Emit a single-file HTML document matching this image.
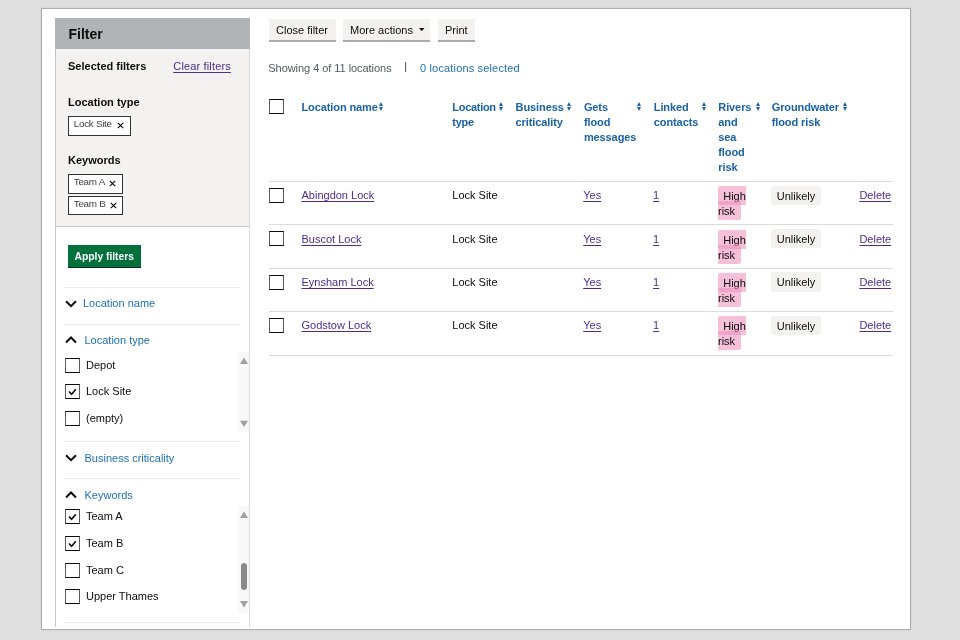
<!DOCTYPE html>
<html><head><meta charset="utf-8">
<style>
*{box-sizing:border-box;margin:0;padding:0}
html,body{width:960px;height:640px;overflow:hidden;white-space:nowrap;background:#dfdfdf;font-family:"Liberation Sans",sans-serif;color:#0b0c0c;font-size:11px;line-height:15px}
.a{position:absolute}
svg{display:block}
#bg{position:absolute;left:42px;top:9px;width:868px;height:620px;background:#fff;box-shadow:0 0 0 1px #adadad,0 0 2px 1px rgba(0,0,0,.1)}
#frame{position:absolute;left:41px;top:8px;width:869px;height:621px;will-change:transform}
#panel{position:absolute;left:14px;top:11px;width:195px;height:608px;border-left:1px solid #c5c8ca;border-right:1px solid #d9dbdd;background:#fff}
#fhead{position:absolute;left:-1px;top:-1px;width:195px;height:31px;background:#b1b4b6}
#fhead span{margin-top:1px}
#fhead span{position:absolute;left:13.5px;top:6px;font-size:14px;font-weight:bold;line-height:18px}
#sel{position:absolute;left:0;top:30px;width:193px;height:178px;background:#f3f2f1;border-bottom:1px solid #c5c8ca}
.b{font-weight:bold}
.link{color:#4c2c92;text-decoration:underline;text-underline-offset:2px}
.blue{color:#1d70b8}
.tag{position:absolute;border:1px solid #303233;background:#fff;height:20px}
.tag span{position:absolute;left:4.8px;top:1px;font-size:9.9px;letter-spacing:-0.3px;line-height:12px;color:#3d4043}
.tag i{position:absolute}
.btn-g{position:absolute;left:12px;background:#00703c;box-shadow:0 1px 0 #002d18;color:#fff;font-weight:bold;font-size:10.3px;height:21.5px;line-height:24px;padding:0 6.5px;width:73px;white-space:nowrap}
.div{position:absolute;left:8px;width:176px;height:1px;background:#ededed}
.sec{position:absolute;left:27px;color:#1d70b8;font-size:11px}
.chev{position:absolute;left:9px}
.cb{position:absolute;width:15px;height:15px;border:1px solid #0b0c0c;border-left-color:#5a5b5c;border-right-color:#5a5b5c;background:#fff}
.cb svg{position:absolute;left:0;top:0}
.lbl{position:absolute;left:30px}
.scroll{position:absolute;left:182px;width:11px;background:#f8f8f8}
.btn{position:absolute;top:11px;height:21px;background:#f3f2f1;box-shadow:0 2px 0 #ababab;line-height:22px;padding:0 7px}
.th{position:absolute;top:92px;color:#1a62a8;font-weight:bold;letter-spacing:-0.1px}
.sort{position:absolute}
.rowb{position:absolute;left:227.5px;width:624px;height:1px;background:#d9dbdd}
.pink{background:rgba(238,140,185,.55);border-radius:2px;padding:3.8px 5.5px 3.3px 5.2px;-webkit-box-decoration-break:slice;box-decoration-break:slice}
.grey{position:absolute;background:#f3f2f1;border-radius:3px;height:19.3px;line-height:20px;padding:0 5.8px 0 5.4px}
</style></head><body>
<div id="bg"></div>
<div id="frame">
  <div id="panel">
    <div id="fhead"><span>Filter</span></div>
    <div id="sel">
      <div class="a b" style="left:12px;top:10px">Selected filters</div>
      <div class="a link" style="left:117.3px;top:10px;letter-spacing:0.15px">Clear filters</div>
      <div class="a b" style="left:12px;top:46px">Location type</div>
      <div class="tag" style="left:12px;top:67px;width:63px;height:20px"><span>Lock Site</span><i style="left:48px;top:5px"><svg width="7" height="7" viewBox="0 0 7 7"><path d="M0.8 0.8 L6.2 6.2 M6.2 0.8 L0.8 6.2" stroke="#0b0c0c" stroke-width="1.15"/></svg></i></div>
      <div class="a b" style="left:12px;top:104px">Keywords</div>
      <div class="tag" style="left:12px;top:124.5px;width:55px;height:20px"><span>Team A</span><i style="left:39.6px;top:5.6px"><svg width="7" height="7" viewBox="0 0 7 7"><path d="M0.8 0.8 L6.2 6.2 M6.2 0.8 L0.8 6.2" stroke="#0b0c0c" stroke-width="1.15"/></svg></i></div>
      <div class="tag" style="left:12px;top:147.3px;width:55px;height:19px"><span>Team B</span><i style="left:40.6px;top:4.9px"><svg width="7" height="7" viewBox="0 0 7 7"><path d="M0.8 0.8 L6.2 6.2 M6.2 0.8 L0.8 6.2" stroke="#0b0c0c" stroke-width="1.15"/></svg></i></div>
    </div>
    <div class="btn-g" style="top:226px">Apply filters</div>
    <div class="div" style="top:268px"></div>
    <div class="chev" style="top:281px"><svg width="12" height="8" viewBox="0 0 12 8"><path d="M1 1.2 L6 6.2 L11 1.2" fill="none" stroke="#0b0c0c" stroke-width="2"/></svg></div>
    <div class="sec" style="top:277px;left:27px">Location name</div>
    <div class="div" style="top:305px"></div>
    <div class="chev" style="top:317.4px"><svg width="12" height="8" viewBox="0 0 12 8"><path d="M1 6.5 L6 1.5 L11 6.5" fill="none" stroke="#0b0c0c" stroke-width="2"/></svg></div>
    <div class="sec" style="top:314px;left:28.5px">Location type</div>
    <div class="scroll" style="top:333px;height:80px"><svg class="a" style="left:0;top:0" width="11" height="80" viewBox="0 0 11 80"><path d="M2 12 L6 5.6 L10 12Z" fill="#a0a0a0"/><path d="M2 68.7 L10 68.7 L6 75Z" fill="#a0a0a0"/></svg></div>
    <div class="cb" style="left:9px;top:339px"></div><div class="lbl" style="top:339px">Depot</div>
    <div class="cb" style="left:9px;top:365px"><svg width="13" height="13" viewBox="0 0 13 13"><path d="M3 6.5 L5.6 9.2 L9.8 4.2" fill="none" stroke="#0b0c0c" stroke-width="1.6"/></svg></div><div class="lbl" style="top:365px">Lock Site</div>
    <div class="cb" style="left:9px;top:392px"></div><div class="lbl" style="top:392px">(empty)</div>
    <div class="div" style="top:422px"></div>
    <div class="chev" style="top:435px"><svg width="12" height="8" viewBox="0 0 12 8"><path d="M1 1.2 L6 6.2 L11 1.2" fill="none" stroke="#0b0c0c" stroke-width="2"/></svg></div>
    <div class="sec" style="top:432px;left:28.5px">Business criticality</div>
    <div class="div" style="top:459px"></div>
    <div class="chev" style="top:472.4px"><svg width="12" height="8" viewBox="0 0 12 8"><path d="M1 6.5 L6 1.5 L11 6.5" fill="none" stroke="#0b0c0c" stroke-width="2"/></svg></div>
    <div class="sec" style="top:469px;left:28.5px">Keywords</div>
    <div class="scroll" style="top:487px;height:107px"><svg class="a" style="left:0;top:0" width="11" height="109" viewBox="0 0 11 109"><path d="M2 12 L6 5.6 L10 12Z" fill="#a0a0a0"/><path d="M2 95 L10 95 L6 101.4Z" fill="#a0a0a0"/><rect x="3" y="57" width="6" height="27" rx="3" fill="#8a8a8a"/></svg></div>
    <div class="cb" style="left:9px;top:490px"><svg width="13" height="13" viewBox="0 0 13 13"><path d="M3 6.5 L5.6 9.2 L9.8 4.2" fill="none" stroke="#0b0c0c" stroke-width="1.6"/></svg></div><div class="lbl" style="top:490px">Team A</div>
    <div class="cb" style="left:9px;top:517px"><svg width="13" height="13" viewBox="0 0 13 13"><path d="M3 6.5 L5.6 9.2 L9.8 4.2" fill="none" stroke="#0b0c0c" stroke-width="1.6"/></svg></div><div class="lbl" style="top:517px">Team B</div>
    <div class="cb" style="left:9px;top:544px"></div><div class="lbl" style="top:544px">Team C</div>
    <div class="cb" style="left:9px;top:570px"></div><div class="lbl" style="top:570px">Upper Thames</div>
    <div class="div" style="top:603px"></div>
  </div>
<div class="btn" style="left:228px;width:67px">Close filter</div>
<div class="btn" style="left:302px;width:87px">More actions<svg class="a" style="left:75.8px;top:9.4px" width="6" height="4" viewBox="0 0 6 4"><path d="M0 0 L5.5 0 L2.75 3.1Z" fill="#0b0c0c"/></svg></div>
<div class="btn" style="left:397px;width:37px">Print</div>
<div class="a" style="left:227.3px;top:52.5px;color:#505a5f;letter-spacing:-0.05px">Showing 4 of 11 locations</div>
<div class="a" style="left:363.3px;top:51.2px;color:#383838">|</div>
<div class="a blue" style="left:379px;top:52.5px;letter-spacing:0.16px">0 locations selected</div>
<div class="cb" style="left:228px;top:91px"></div>
<div class="th" style="left:260.5px">Location name</div>
<div class="sort" style="left:338.2px;top:93.6px"><svg width="5" height="10" viewBox="0 0 5 10"><path d="M0 4.1 L2 0 L4 4.1Z M0 5 L4 5 L2 9.1Z" fill="#1a62a8"/></svg></div>
<div class="th" style="left:411.3px;letter-spacing:-0.3px">Location<br>type</div>
<div class="sort" style="left:458.4px;top:93.6px"><svg width="5" height="10" viewBox="0 0 5 10"><path d="M0 4.1 L2 0 L4 4.1Z M0 5 L4 5 L2 9.1Z" fill="#1a62a8"/></svg></div>
<div class="th" style="left:474.6px">Business<br>criticality</div>
<div class="sort" style="left:526.2px;top:93.6px"><svg width="5" height="10" viewBox="0 0 5 10"><path d="M0 4.1 L2 0 L4 4.1Z M0 5 L4 5 L2 9.1Z" fill="#1a62a8"/></svg></div>
<div class="th" style="left:542.9px">Gets<br>flood<br>messages</div>
<div class="sort" style="left:596.4px;top:93.6px"><svg width="5" height="10" viewBox="0 0 5 10"><path d="M0 4.1 L2 0 L4 4.1Z M0 5 L4 5 L2 9.1Z" fill="#1a62a8"/></svg></div>
<div class="th" style="left:612.8px">Linked<br>contacts</div>
<div class="sort" style="left:660.8px;top:93.6px"><svg width="5" height="10" viewBox="0 0 5 10"><path d="M0 4.1 L2 0 L4 4.1Z M0 5 L4 5 L2 9.1Z" fill="#1a62a8"/></svg></div>
<div class="th" style="left:677.3px">Rivers<br>and<br>sea<br>flood<br>risk</div>
<div class="sort" style="left:714.5px;top:93.6px"><svg width="5" height="10" viewBox="0 0 5 10"><path d="M0 4.1 L2 0 L4 4.1Z M0 5 L4 5 L2 9.1Z" fill="#1a62a8"/></svg></div>
<div class="th" style="left:730.7px">Groundwater<br>flood risk</div>
<div class="sort" style="left:801.6px;top:93.6px"><svg width="5" height="10" viewBox="0 0 5 10"><path d="M0 4.1 L2 0 L4 4.1Z M0 5 L4 5 L2 9.1Z" fill="#1a62a8"/></svg></div>
<div class="rowb" style="top:173px"></div>
<div class="cb" style="left:228px;top:180.0px"></div>
<div class="a link" style="left:260.5px;top:180.1px">Abingdon Lock</div>
<div class="a" style="left:411.3px;top:180.1px">Lock Site</div>
<div class="a link" style="left:542.2px;top:180.1px">Yes</div>
<div class="a link" style="left:612.1px;top:180.1px">1</div>
<div class="a" style="left:677px;top:180.9px;width:34px;white-space:normal"><span class="pink">High risk</span></div>
<div class="grey" style="left:730.3px;top:177.5px">Unlikely</div>
<div class="a link" style="left:818.4px;top:180.1px">Delete</div>
<div class="rowb" style="top:216.4px"></div>
<div class="cb" style="left:228px;top:223.4px"></div>
<div class="a link" style="left:260.5px;top:223.5px">Buscot Lock</div>
<div class="a" style="left:411.3px;top:223.5px">Lock Site</div>
<div class="a link" style="left:542.2px;top:223.5px">Yes</div>
<div class="a link" style="left:612.1px;top:223.5px">1</div>
<div class="a" style="left:677px;top:224.3px;width:34px;white-space:normal"><span class="pink">High risk</span></div>
<div class="grey" style="left:730.3px;top:220.9px">Unlikely</div>
<div class="a link" style="left:818.4px;top:223.5px">Delete</div>
<div class="rowb" style="top:259.8px"></div>
<div class="cb" style="left:228px;top:266.8px"></div>
<div class="a link" style="left:260.5px;top:266.9px">Eynsham Lock</div>
<div class="a" style="left:411.3px;top:266.9px">Lock Site</div>
<div class="a link" style="left:542.2px;top:266.9px">Yes</div>
<div class="a link" style="left:612.1px;top:266.9px">1</div>
<div class="a" style="left:677px;top:267.7px;width:34px;white-space:normal"><span class="pink">High risk</span></div>
<div class="grey" style="left:730.3px;top:264.3px">Unlikely</div>
<div class="a link" style="left:818.4px;top:266.9px">Delete</div>
<div class="rowb" style="top:303.2px"></div>
<div class="cb" style="left:228px;top:310.2px"></div>
<div class="a link" style="left:260.5px;top:310.3px">Godstow Lock</div>
<div class="a" style="left:411.3px;top:310.3px">Lock Site</div>
<div class="a link" style="left:542.2px;top:310.3px">Yes</div>
<div class="a link" style="left:612.1px;top:310.3px">1</div>
<div class="a" style="left:677px;top:311.1px;width:34px;white-space:normal"><span class="pink">High risk</span></div>
<div class="grey" style="left:730.3px;top:307.7px">Unlikely</div>
<div class="a link" style="left:818.4px;top:310.3px">Delete</div>
<div class="rowb" style="top:346.6px"></div>
</div>
</body></html>
